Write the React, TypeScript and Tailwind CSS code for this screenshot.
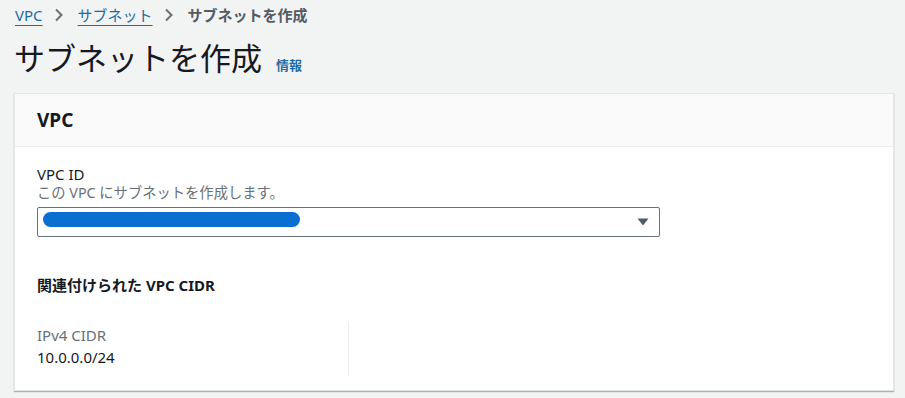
import React from "react";

export default function App() {
  const font = { fontFamily: '"Noto Sans", "Noto Sans CJK JP", sans-serif' };
  return (
    <div className="w-[905px] h-[398px] bg-[#f2f3f3] overflow-hidden text-[#16191f]" style={font}>
      <div className="pl-[15px] pt-[4px] flex items-center h-[26px] text-[15px] leading-[20px]">
        <span className="text-[#1d6aa5] underline underline-offset-[4px] decoration-[1px]">VPC</span>
        <svg className="ml-[11px] mr-[14px]" width="10" height="14" viewBox="0 0 10 14">
          <path d="M2 1.5 L7.5 7 L2 12.5" stroke="#687078" strokeWidth="2" fill="none" />
        </svg>
        <span className="text-[#1d6aa5] underline underline-offset-[4px] decoration-[1px]">サブネット</span>
        <svg className="ml-[11px] mr-[14px]" width="10" height="14" viewBox="0 0 10 14">
          <path d="M2 1.5 L7.5 7 L2 12.5" stroke="#687078" strokeWidth="2" fill="none" />
        </svg>
        <span className="font-bold text-[#545b64]">サブネットを作成</span>
      </div>
      <div className="pl-[14px] mt-[9px] flex items-end h-[44px]">
        <span className="text-[31px] leading-[42px] text-[#16191f]">サブネットを作成</span>
        <span className="ml-[14px] mb-[4px] text-[13px] font-bold text-[#1d6aa5]">情報</span>
      </div>
      <div className="ml-[14px] mt-[14px] w-[880px] h-[298px] bg-white border border-[#e4e6e6] shadow-[0_1px_1px_0_rgba(0,28,36,0.3)]">
        <div className="h-[53px] bg-[#fafafa] border-b border-[#eaeded] pl-[22px] flex items-center">
          <span className="text-[19px] font-bold leading-[22px]">VPC</span>
        </div>
        <div className="pl-[22px] pt-[17px]">
          <div className="text-[15px] leading-[20px]">VPC ID</div>
          <div className="text-[14.3px] leading-[18px] text-[#687078]">この VPC にサブネットを作成します。</div>
          <div className="mt-[5px] w-[623px] h-[30px] border border-[#687078] rounded-[2px] flex items-start justify-between pl-[5px] pr-[10px]">
            <div className="mt-[4px] w-[257px] h-[15px] rounded-full bg-[#0a6fd1]" />
            <svg className="mt-[10px]" width="12" height="8" viewBox="0 0 12 8">
              <path d="M0.5 0.5 H11.5 L6 7.5 Z" fill="#545b64" />
            </svg>
          </div>
          <div className="mt-[38px] text-[15px] font-bold leading-[20px]">関連付けられた VPC CIDR</div>
          <div className="mt-[27px] flex">
            <div className="w-[312px] h-[54px] border-r border-[#eaeded] pt-[3px]">
              <div className="text-[15px] leading-[20px] text-[#687078]">IPv4 CIDR</div>
              <div className="text-[15px] leading-[20px] mt-[2px]">10.0.0.0/24</div>
            </div>
          </div>
        </div>
      </div>
    </div>
  );
}
